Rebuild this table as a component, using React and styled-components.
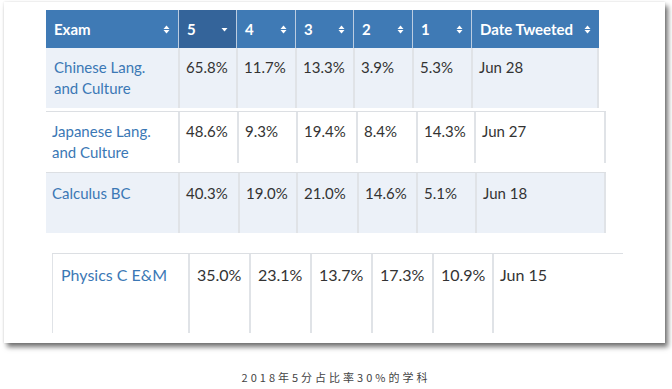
import React from 'react';
import styled, { createGlobalStyle } from 'styled-components';

const Global = createGlobalStyle`
  html, body { margin: 0; padding: 0; background: #fff; }
  body { font-family: Lato, "Noto Sans", sans-serif; }
`;

const Page = styled.div`
  width: 672px;
  height: 389px;
  padding: 2px 0 0 4px;
  box-sizing: border-box;
  overflow: hidden;
`;

const Card = styled.div`
  width: 661px;
  height: 341px;
  box-sizing: border-box;
  background: #fff;
  padding-top: 8px;
  box-shadow: 0 0 2px rgba(0, 0, 0, 0.12), 3px 4px 5px rgba(0, 0, 0, 0.55);
  display: flex;
  flex-direction: column;
  align-items: flex-start;
`;

const Strip = styled.div`
  display: grid;
  grid-template-columns: ${(p) => p.$cols};
  margin-left: ${(p) => p.$left}px;
  margin-top: ${(p) => p.$gap || 0}px;
  height: ${(p) => p.$h}px;
  background: ${(p) => p.$bg || 'transparent'};
  border-top: ${(p) => (p.$topLine ? '1px solid #dcdfe3' : 'none')};
  box-sizing: border-box;
  font-size: ${(p) => p.$fs || 15}px;
  line-height: ${(p) => p.$lh || 21}px;
`;

const HeadCell = styled.div`
  display: flex;
  align-items: center;
  justify-content: space-between;
  padding: 0 8px 0 8px;
  box-sizing: border-box;
  background: ${(p) => (p.$sorted ? '#34649a' : '#3f7ab5')};
  border-left: ${(p) => (p.$first ? 'none' : '1px solid #bccde1')};
  color: #fff;
  font-weight: 700;
  font-size: 15px;
`;

const Cell = styled.div`
  box-sizing: border-box;
  padding: ${(p) => p.$pt}px 4px 0 ${(p) => p.$pl}px;
  border-left: ${(p) => (p.$noLeft ? 'none' : `${p.$bw || 2}px solid #e0e3e7`)};
  border-right: ${(p) => (p.$right ? '2px solid #e0e3e7' : 'none')};
  color: #333;
`;

const ExamLink = styled.a`
  color: #3b78b5;
  text-decoration: none;
`;

const Caption = styled.p`
  margin: 26px 0 0 -4px;
  width: 672px;
  text-align: center;
  font-family: "Noto Sans CJK SC", "Noto Sans", sans-serif;
  font-size: 11px;
  line-height: 16px;
  letter-spacing: 3px;
  color: #444;
`;

const SortBoth = () => (
  <svg width="7" height="9" viewBox="0 0 7 9">
    <polygon points="0.5,4 3.5,0.5 6.5,4" fill="#fff" />
    <polygon points="0.5,5 3.5,8.5 6.5,5" fill="#fff" />
  </svg>
);

const SortDown = () => (
  <svg width="7" height="5" viewBox="0 0 7 5">
    <polygon points="0.5,1 3.5,4.5 6.5,1" fill="#fff" />
  </svg>
);

const headers = ['Exam', '5', '4', '3', '2', '1', 'Date Tweeted'];

const rows = [
  {
    exam: ['Chinese Lang.', 'and Culture'],
    vals: ['65.8%', '11.7%', '13.3%', '3.9%', '5.3%', 'Jun 28'],
    cols: '132px 58px 59px 58px 59px 59px 128px',
    left: 42, gap: 0, h: 60, bg: '#ecf1f8', pt: 9, firstPl: 8, pl: 6, right: true, firstNoLeft: true,
  },
  {
    exam: ['Japanese Lang.', 'and Culture'],
    vals: ['48.6%', '9.3%', '19.4%', '8.4%', '14.3%', 'Jun 27'],
    cols: '132px 59px 59px 60px 60px 58px 132px',
    left: 42, gap: 3, h: 51, bg: '#fff', pt: 9, firstPl: 6, pl: 6, right: true, firstNoLeft: true, topLine: true,
  },
  {
    exam: ['Calculus BC'],
    vals: ['40.3%', '19.0%', '21.0%', '14.6%', '5.1%', 'Jun 18'],
    cols: '132px 60px 58px 61px 59px 59px 131px',
    left: 42, gap: 10, h: 61, bg: '#ecf1f8', pt: 10, firstPl: 6, pl: 6, right: true, firstNoLeft: true, topLine: true,
  },
  {
    exam: ['Physics C E&M'],
    vals: ['35.0%', '23.1%', '13.7%', '17.3%', '10.9%', 'Jun 15'],
    cols: '136px 61px 61px 61px 61px 60px 131px',
    left: 48, gap: 20, h: 80, bg: '#fff', pt: 10, firstPl: 8, pl: 7, right: false, firstNoLeft: false, topLine: true, fs: 16, lh: 22,
  },
];

export default function App() {
  return (
    <>
      <Global />
      <Page>
        <Card>
          <Strip $cols="132px 58px 59px 58px 59px 59px 128px" $left={42} $h={38}>
            {headers.map((h, i) => (
              <HeadCell key={h} $first={i === 0} $sorted={i === 1}>
                <span>{h}</span>
                {i === 1 ? <SortDown /> : <SortBoth />}
              </HeadCell>
            ))}
          </Strip>
          {rows.map((r) => (
            <Strip
              key={r.exam[0]}
              $cols={r.cols}
              $left={r.left}
              $gap={r.gap}
              $h={r.h}
              $bg={r.bg}
              $topLine={r.topLine}
              $fs={r.fs}
              $lh={r.lh}
            >
              <Cell $pt={r.pt} $pl={r.firstPl} $noLeft={r.firstNoLeft} $bw={1}>
                <ExamLink href="#">
                  {r.exam.map((line, k) => (
                    <React.Fragment key={k}>
                      {k > 0 && <br />}
                      {line}
                    </React.Fragment>
                  ))}
                </ExamLink>
              </Cell>
              {r.vals.map((v, j) => (
                <Cell key={j} $pt={r.pt} $pl={j === 5 ? 6 : r.pl} $right={r.right && j === 5}>
                  {v}
                </Cell>
              ))}
            </Strip>
          ))}
        </Card>
        <Caption>2018年5分占比率30%的学科</Caption>
      </Page>
    </>
  );
}
